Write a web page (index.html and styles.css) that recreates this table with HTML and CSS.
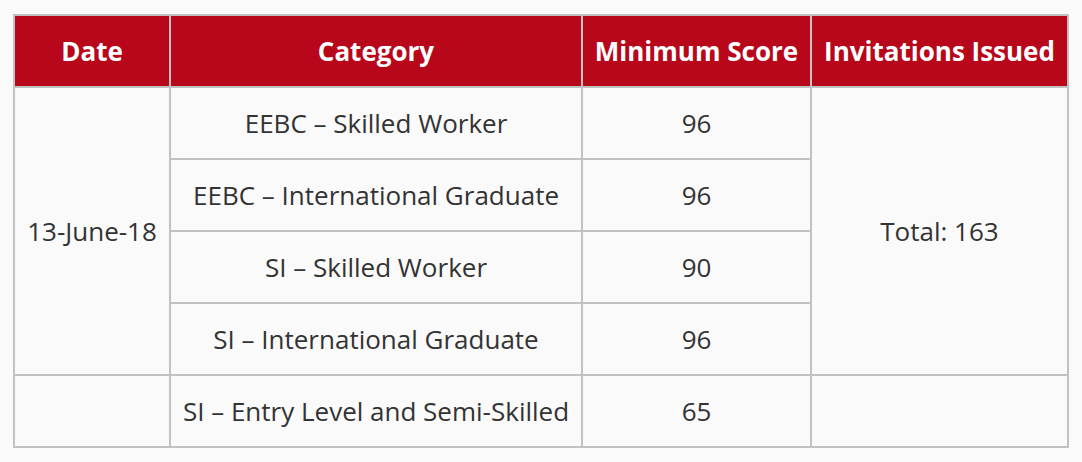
FILE: index.html
```html
<!DOCTYPE html>
<html lang="en">
<head>
<meta charset="utf-8">
<title>Draw results</title>
<link rel="stylesheet" href="styles.css">
</head>
<body>
<table class="draws">
  <colgroup>
    <col class="c-date">
    <col class="c-cat">
    <col class="c-score">
    <col class="c-inv">
  </colgroup>
  <thead>
    <tr>
      <th>Date</th>
      <th>Category</th>
      <th>Minimum Score</th>
      <th>Invitations Issued</th>
    </tr>
  </thead>
  <tbody>
    <tr>
      <td rowspan="4">13-June-18</td>
      <td>EEBC – Skilled Worker</td>
      <td>96</td>
      <td rowspan="4">Total: 163</td>
    </tr>
    <tr>
      <td>EEBC – International Graduate</td>
      <td>96</td>
    </tr>
    <tr>
      <td>SI – Skilled Worker</td>
      <td>90</td>
    </tr>
    <tr>
      <td>SI – International Graduate</td>
      <td>96</td>
    </tr>
    <tr>
      <td></td>
      <td>SI – Entry Level and Semi-Skilled</td>
      <td>65</td>
      <td></td>
    </tr>
  </tbody>
</table>
</body>
</html>
```
FILE: styles.css
```css
html, body {
  margin: 0;
  background: #fafafa;
}
body {
  padding: 14px 0 0 13px;
  font-family: "Open Sans", "Liberation Sans", sans-serif;
}
.draws {
  border-collapse: collapse;
  table-layout: fixed;
  width: 1056px;
  color: #333333;
  font-size: 26px;
}
.c-date { width: 156px; }
.c-cat { width: 412px; }
.c-score { width: 229px; }
.c-inv { width: 257px; }
.draws th,
.draws td {
  border: 2px solid #c2c2c2;
  height: 72px;
  padding: 2px 0 0;
  text-align: center;
  vertical-align: middle;
  box-sizing: border-box;
  line-height: 1.2;
}
.draws th {
  background: #b8071a;
  color: #ffffff;
  font-weight: 700;
}
```
